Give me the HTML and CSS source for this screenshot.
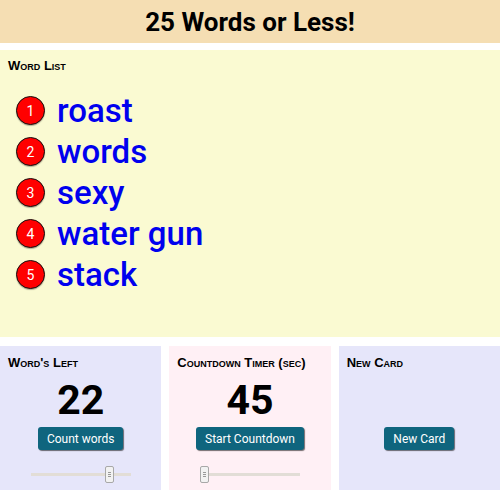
FILE: index.html
```html
<!DOCTYPE html>
<html>
<head>
<meta charset="utf-8">
<link rel="stylesheet" href="styles.css">
</head>
<body>
<header class="header"><h1 class="title">25 Words or Less!</h1></header>
<section class="wordlist">
  <h2 class="heading">Word List</h2>
  <ol class="words">
    <li class="word-row"><span class="num">1</span><span class="word">roast</span></li>
    <li class="word-row"><span class="num">2</span><span class="word">words</span></li>
    <li class="word-row"><span class="num">3</span><span class="word">sexy</span></li>
    <li class="word-row"><span class="num">4</span><span class="word">water gun</span></li>
    <li class="word-row"><span class="num">5</span><span class="word">stack</span></li>
  </ol>
</section>
<section class="cards">
  <div class="card card-lav">
    <h2 class="heading">Word's Left</h2>
    <div class="big">22</div>
    <button class="btn">Count words</button>
    <div class="slider"><div class="track"></div><div class="thumb" style="left: 74px"></div></div>
  </div>
  <div class="card card-pink">
    <h2 class="heading">Countdown Timer (sec)</h2>
    <div class="big">45</div>
    <button class="btn">Start Countdown</button>
    <div class="slider"><div class="track"></div><div class="thumb" style="left: 0px"></div></div>
  </div>
  <div class="card card-lav">
    <h2 class="heading">New Card</h2>
    <div class="big empty"></div>
    <button class="btn">New Card</button>
  </div>
</section>
</body>
</html>
```
FILE: styles.css
```css
* { box-sizing: border-box; }
html, body { margin: 0; padding: 0; background: #ffffff; }
body { font-family: Roboto, "Liberation Sans", sans-serif; width: 500px; height: 500px; overflow: hidden; }

.header {
  background: #f5deb3;
  height: 43px;
  margin-bottom: 7px;
  display: flex;
  align-items: center;
  justify-content: center;
}
.title {
  margin: 0;
  font-family: Roboto, sans-serif;
  font-weight: 700;
  font-size: 26px;
  color: #000;
  line-height: 1;
}

.heading {
  margin: 0;
  font-family: "Liberation Sans", Arial, sans-serif;
  font-weight: 700;
  font-size: 13px;
  font-variant: small-caps;
  line-height: 14px;
  color: #000;
}

.wordlist {
  background: #fafad2;
  height: 287px;
  margin-bottom: 9px;
  padding: 9px 8px;
}
.words {
  list-style: none;
  margin: 17px 0 0 0;
  padding: 0 0 0 8px;
}
.word-row {
  display: flex;
  align-items: center;
  height: 41px;
}
.num {
  width: 29px;
  height: 29px;
  border-radius: 50%;
  background: #ff0000;
  border: 1.5px solid #111;
  color: #fff;
  font-family: Roboto, sans-serif;
  font-size: 14px;
  display: flex;
  align-items: center;
  justify-content: center;
  margin-right: 12px;
  box-shadow: 0 1px 1px rgba(0,0,0,0.3);
}
.word {
  color: #0000ee;
  font-family: Roboto, sans-serif;
  font-weight: 500;
  font-size: 33px;
  line-height: 41px;
}

.cards {
  display: flex;
  gap: 8px;
  height: 144px;
}
.card {
  flex: 1;
  padding: 10px 8px 0 8px;
  display: flex;
  flex-direction: column;
  align-items: center;
}
.card .heading { align-self: stretch; }
.card-lav { background: #e6e6fa; }
.card-pink { background: #fff0f5; }

.big {
  font-family: Roboto, sans-serif;
  font-weight: 700;
  font-size: 41px;
  line-height: 47px;
  height: 47px;
  margin-top: 7px;
  color: #000;
}
.btn {
  margin-top: 3px;
  height: 23px;
  padding: 0 9px;
  border: none;
  border-radius: 3px;
  background: #0f657e;
  color: #fff;
  font-family: Roboto, sans-serif;
  font-size: 12px;
  box-shadow: 1px 1px 1px rgba(0,0,0,0.55);
}
.slider {
  position: relative;
  width: 100px;
  height: 17px;
  margin-top: 16px;
}
.track {
  position: absolute;
  left: 0; right: 0;
  top: 7px;
  height: 3px;
  background: #e2ddd6;
}
.thumb {
  position: absolute;
  top: 0;
  width: 9px;
  height: 17px;
  background: #f2f2f2;
  border: 1px solid #a8a8a8;
  border-radius: 2px;
  background-image: linear-gradient(#999,#999), linear-gradient(#999,#999), linear-gradient(#999,#999);
  background-size: 3px 1px, 3px 1px, 3px 1px;
  background-position: 2px 5px, 2px 7px, 2px 9px;
  background-repeat: no-repeat;
}
```
